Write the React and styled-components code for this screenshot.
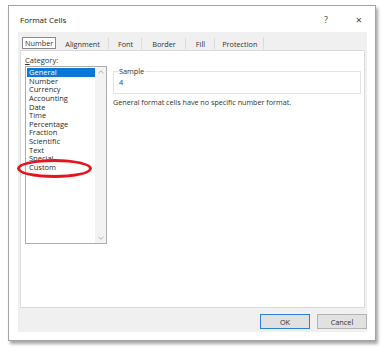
import React from 'react'
import styled, { createGlobalStyle } from 'styled-components'

const GlobalStyle = createGlobalStyle`
  html, body {
    margin: 0;
    padding: 0;
    background: #ffffff;
  }
  body {
    font-family: "Open Sans", "Noto Sans", sans-serif;
    color: #1e1e1e;
  }
`

const Page = styled.div`
  width: 386px;
  height: 353px;
  padding: 5px 0 0 8px;
  box-sizing: border-box;
`

const Window = styled.div`
  width: 368px;
  height: 336px;
  box-sizing: border-box;
  border: 1px solid #a3a3a3;
  background: #ffffff;
  box-shadow: 2px 3px 3px rgba(0, 0, 0, 0.35);
  display: flex;
  flex-direction: column;
`

const TitleBar = styled.div`
  height: 26px;
  display: flex;
  align-items: center;
  padding: 0 0 0 11px;
  font-size: 8px;
  color: #222;
`

const Title = styled.span`
  flex: 1;
`

const TitleButton = styled.span`
  width: ${(p) => p.w}px;
  text-align: center;
  font-size: ${(p) => p.size}px;
  color: #444;
`

const Body = styled.div`
  flex: 1;
  margin: 0 8px 8px 9px;
  background: #f0f0f0;
  display: flex;
  flex-direction: column;
`

const TabStrip = styled.div`
  height: 18px;
  display: flex;
  align-items: flex-end;
  padding-left: 2px;
`

const Tab = styled.div`
  height: ${(p) => (p.active ? 12 : 13)}px;
  margin-bottom: ${(p) => (p.active ? 1 : 0)}px;
  margin-left: ${(p) => (p.active ? 2 : 0)}px;
  padding: 0 ${(p) => p.pad}px;
  display: flex;
  align-items: center;
  font-size: 7.3px;
  color: #333;
  box-sizing: border-box;
  background: ${(p) => (p.active ? '#ffffff' : 'transparent')};
  border: 1px solid ${(p) => (p.active ? '#8a8a8a' : 'transparent')};
  border-right: 1px solid ${(p) => (p.active ? '#8a8a8a' : '#dcdcdc')};
`

const Panel = styled.div`
  height: 258px;
  margin: 0 2px 0 2px;
  background: #ffffff;
  border: 1px solid #dadada;
  box-sizing: border-box;
  display: flex;
  padding: 4px 0 0 4px;
  gap: 6px;
`

const LeftCol = styled.div`
  display: flex;
  flex-direction: column;
`

const Label = styled.div`
  font-size: 7.5px;
  color: #333;
  height: 11px;
  line-height: 11px;
  & u {
    text-decoration: underline;
  }
`

const ListBox = styled.div`
  position: relative;
  width: 82px;
  height: 178px;
  box-sizing: border-box;
  border: 1px solid #acacac;
  display: flex;
`

const Items = styled.div`
  flex: 1;
  padding: 1px 0 0 1px;
`

const Item = styled.div`
  height: 8.65px;
  line-height: 8.65px;
  font-size: 7.5px;
  padding-left: 2px;
  color: ${(p) => (p.sel ? '#ffffff' : '#2a2a2a')};
  background: ${(p) => (p.sel ? '#0a78d7' : 'transparent')};
  white-space: nowrap;
`

const ScrollBar = styled.div`
  width: 11px;
  background: #f3f3f3;
  display: flex;
  flex-direction: column;
  justify-content: space-between;
  align-items: center;
  padding: 3px 0;
`

const Ring = styled.div`
  position: absolute;
  left: -9px;
  top: 92px;
  width: 75px;
  height: 19px;
  border: 3px solid #e3161f;
  border-radius: 50%;
  box-sizing: border-box;
`

const RightCol = styled.div`
  flex: 1;
  padding: 11px 3px 0 0;
  display: flex;
  flex-direction: column;
`

const SampleBox = styled.fieldset`
  margin: 0;
  height: 28px;
  border: 1px solid #e3e3e3;
  box-sizing: border-box;
  padding: 1px 0 0 5px;
  font-size: 7.3px;
  color: #333;
  line-height: 10px;
`

const Legend = styled.legend`
  padding: 0 1px;
  margin-left: -1px;
  font-size: 7.3px;
  line-height: 10px;
`

const Note = styled.div`
  margin-top: 3px;
  font-size: 7.2px;
  color: #333;
`

const Footer = styled.div`
  flex: 1;
  display: flex;
  justify-content: flex-end;
  align-items: flex-start;
  gap: 7px;
  padding: 6px 0 0 0;
`

const Button = styled.div`
  width: 50px;
  height: 15px;
  box-sizing: border-box;
  display: flex;
  align-items: center;
  justify-content: center;
  font-size: 7.3px;
  color: #333;
  background: #e1e1e1;
  border: ${(p) => (p.primary ? '1.5px solid #2f7fd6' : '1px solid #b3b3b3')};
`

const Arrow = ({ down }) => (
  <svg width="6" height="4" viewBox="0 0 6 4">
    <path
      d={down ? 'M0.5 0.8 L3 3.2 L5.5 0.8' : 'M0.5 3.2 L3 0.8 L5.5 3.2'}
      fill="none"
      stroke="#a0a0a0"
      strokeWidth="0.8"
    />
  </svg>
)

const categories = [
  'General',
  'Number',
  'Currency',
  'Accounting',
  'Date',
  'Time',
  'Percentage',
  'Fraction',
  'Scientific',
  'Text',
  'Special',
  'Custom',
]

const tabs = [
  { name: 'Number', pad: 2, active: true },
  { name: 'Alignment', pad: 8 },
  { name: 'Font', pad: 8 },
  { name: 'Border', pad: 9 },
  { name: 'Fill', pad: 9 },
  { name: 'Protection', pad: 6 },
]

export default function App() {
  return (
    <Page>
      <GlobalStyle />
      <Window>
        <TitleBar>
          <Title>Format Cells</Title>
          <TitleButton w={34} size={9}>?</TitleButton>
          <TitleButton w={32} size={11}>×</TitleButton>
        </TitleBar>
        <Body>
          <TabStrip>
            {tabs.map((t) => (
              <Tab key={t.name} active={t.active} pad={t.pad}>
                {t.name}
              </Tab>
            ))}
          </TabStrip>
          <Panel>
            <LeftCol>
              <Label>
                <u>C</u>ategory:
              </Label>
              <ListBox>
                <Items>
                  {categories.map((c, i) => (
                    <Item key={c} sel={i === 0}>
                      {c}
                    </Item>
                  ))}
                </Items>
                <ScrollBar>
                  <Arrow />
                  <Arrow down />
                </ScrollBar>
                <Ring />
              </ListBox>
            </LeftCol>
            <RightCol>
              <SampleBox>
                <Legend>Sample</Legend>4
              </SampleBox>
              <Note>General format cells have no specific number format.</Note>
            </RightCol>
          </Panel>
          <Footer>
            <Button primary>OK</Button>
            <Button>Cancel</Button>
          </Footer>
        </Body>
      </Window>
    </Page>
  )
}
